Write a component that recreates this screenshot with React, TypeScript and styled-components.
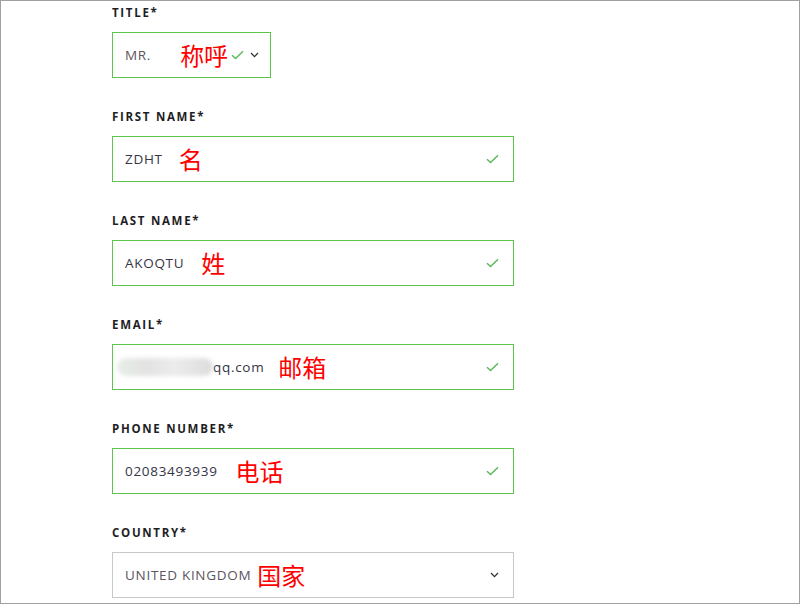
import React from 'react';
import styled, { createGlobalStyle } from 'styled-components';

const GlobalStyle = createGlobalStyle`
  html, body {
    margin: 0;
    padding: 0;
    background: #ffffff;
  }
`;

const Frame = styled.div`
  box-sizing: border-box;
  width: 800px;
  height: 604px;
  border: 1px solid #a0a0a0;
  overflow: hidden;
  background: #fff;
  font-family: 'Open Sans', 'Liberation Sans', sans-serif;
`;

const Form = styled.form`
  display: flex;
  flex-direction: column;
  gap: 32px;
  padding: 5px 0 0 111px;
`;

const Field = styled.div`
  display: flex;
  flex-direction: column;
  gap: 12px;
`;

const Label = styled.label`
  font-size: 11.5px;
  line-height: 14px;
  font-weight: 700;
  letter-spacing: 1.7px;
  color: #1e1e24;
`;

const Box = styled.div<{ $width: number; $valid?: boolean }>`
  box-sizing: border-box;
  width: ${(p) => p.$width}px;
  height: 46px;
  border: 1px solid ${(p) => (p.$valid ? '#5cc64a' : '#c8c8c8')};
  display: flex;
  align-items: center;
  padding: 0 14px 0 12px;
`;

const Value = styled.span<{ $muted?: boolean }>`
  font-size: 13.5px;
  letter-spacing: 0.7px;
  color: ${(p) => (p.$muted ? '#5a5560' : '#353545')};
  white-space: nowrap;
`;

const Note = styled.span<{ $gap: number }>`
  margin-left: ${(p) => p.$gap}px;
  font-family: 'Noto Sans CJK SC', 'Noto Sans', sans-serif;
  font-size: 24px;
  line-height: 1;
  color: #ff0000;
  white-space: nowrap;
`;

const Spacer = styled.span`
  flex: 1;
`;

const Blurred = styled.span`
  display: inline-block;
  width: 96px;
  height: 18px;
  margin-left: -8px;
  border-radius: 9px;
  background: linear-gradient(90deg, #e8eee8 0%, #e2e2e2 30%, #ececec 60%, #dcdcdc 100%);
  filter: blur(2px);
`;

const Icons = styled.span`
  display: flex;
  align-items: center;
  gap: 6px;
  margin-left: 3px;
`;

const Check = () => (
  <svg width="13" height="10" viewBox="0 0 13 10" fill="none">
    <path d="M1 5.2 L4.6 8.6 L12 1.2" stroke="#5cb85c" strokeWidth="1.4" />
  </svg>
);

const Chevron = () => (
  <svg width="9" height="6" viewBox="0 0 9 6" fill="none">
    <path d="M1 1 L4.5 4.6 L8 1" stroke="#333" strokeWidth="1.3" />
  </svg>
);

const TextField: React.FC<{
  label: string;
  value: React.ReactNode;
  note: string;
  gap: number;
}> = ({ label, value, note, gap }) => (
  <Field>
    <Label>{label}</Label>
    <Box $width={402} $valid>
      {value}
      <Note $gap={gap}>{note}</Note>
      <Spacer />
      <Check />
    </Box>
  </Field>
);

export default function App() {
  return (
    <>
      <GlobalStyle />
      <Frame>
        <Form>
          <Field>
            <Label>TITLE*</Label>
            <Box $width={159} $valid>
              <Value $muted>MR.</Value>
              <Note $gap={29}>称呼</Note>
              <Icons>
                <Check />
                <Chevron />
              </Icons>
            </Box>
          </Field>

          <TextField label="FIRST NAME*" value={<Value>ZDHT</Value>} note="名" gap={16} />
          <TextField label="LAST NAME*" value={<Value>AKOQTU</Value>} note="姓" gap={17} />
          <TextField
            label="EMAIL*"
            value={
              <>
                <Blurred />
                <Value>qq.com</Value>
              </>
            }
            note="邮箱"
            gap={14}
          />
          <TextField label="PHONE NUMBER*" value={<Value>02083493939</Value>} note="电话" gap={18} />

          <Field>
            <Label>COUNTRY*</Label>
            <Box $width={402}>
              <Value $muted>UNITED KINGDOM</Value>
              <Note $gap={6}>国家</Note>
              <Spacer />
              <Chevron />
            </Box>
          </Field>
        </Form>
      </Frame>
    </>
  );
}
